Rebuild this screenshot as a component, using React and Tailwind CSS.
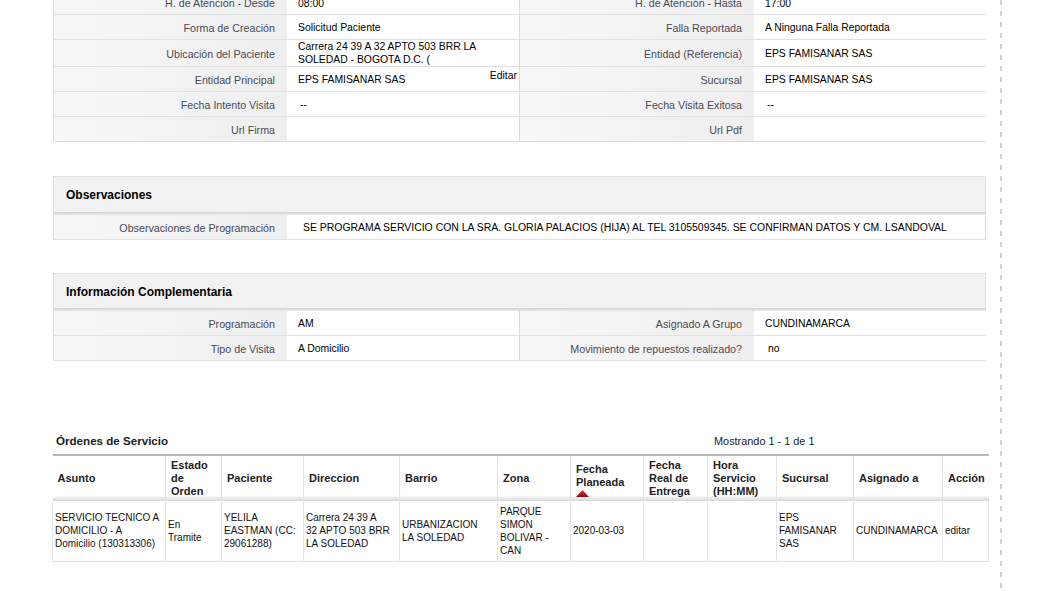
import React from "react";

const LBL = "flex items-center justify-end pr-[12px] pt-[2px] text-right text-[10.7px] text-[#4a4a56] bg-[linear-gradient(to_right,#f7f7f7,#efefef)]";
const VAL = "flex items-center pl-[11px] text-[10.4px] text-black bg-white";

function DRow({ h, cells, tight }) {
  const pad = tight ? "pt-0" : "pt-[2px]";
  return (
    <div className={`grid grid-cols-[233px_233px_234px_233px] border-b border-[#e0e0e0] ${h}`}>
      <div className={LBL}>{cells[0]}</div>
      <div className={`${VAL} ${pad} border-r border-[#dcdcdc] relative overflow-hidden`}>{cells[1]}</div>
      <div className={LBL}>{cells[2]}</div>
      <div className={`${VAL} pt-[2px]`}>{cells[3]}</div>
    </div>
  );
}

function SectionHead({ title, h }) {
  return (
    <>
      <div className={`flex items-center pl-[12px] pt-[1px] bg-[#f2f2f2] text-[12px] font-bold text-black ${h}`}>{title}</div>
      <div className="h-[3px] bg-[linear-gradient(to_bottom,#d2d2d2,#ececec)]" />
    </>
  );
}

const TH = "px-[5px] text-left align-middle font-bold text-[11px] leading-[13px] text-[#222] border-l border-[#e3e3e3] first:border-l-0";
const TD = "pl-[2px] pr-[1px] py-[3px] text-left align-middle text-[10px] leading-[13px] text-[#111] border-l border-[#e6e6e6]";

export default function App() {
  return (
    <div className="flex min-h-[591px] bg-white font-['Liberation_Sans',Arial,sans-serif] overflow-hidden">
      <div className="w-[1000px] shrink-0 pl-[53px] pr-[14px]">
        {/* Detail table */}
        <div className="mt-[-9px] border-l border-r border-[#e0e0e0] w-[933px]">
          <DRow h="h-[24px]" cells={["H. de Atención - Desde", "08:00", "H. de Atención - Hasta", "17:00"]} />
          <DRow h="h-[25px]" cells={["Forma de Creación", "Solicitud Paciente", "Falla Reportada", "A Ninguna Falla Reportada"]} />
          <DRow
            h="h-[27px]"
            tight
            cells={[
              "Ubicación del Paciente",
              <span className="leading-[13px]">Carrera 24 39 A 32 APTO 503 BRR LA<br />SOLEDAD - BOGOTA D.C. (</span>,
              "Entidad (Referencia)",
              "EPS FAMISANAR SAS",
            ]}
          />
          <DRow
            h="h-[25px]"
            cells={[
              "Entidad Principal",
              <>
                <span>EPS FAMISANAR SAS</span>
                <a className="absolute right-[2px] top-[1px] text-[10.4px] text-black">Editar</a>
              </>,
              "Sucursal",
              "EPS FAMISANAR SAS",
            ]}
          />
          <DRow h="h-[25px]" cells={["Fecha Intento Visita", <span className="pl-[2px]">--</span>, "Fecha Visita Exitosa", <span className="pl-[2px]">--</span>]} />
          <DRow h="h-[25px]" cells={["Url Firma", "", "Url Pdf", ""]} />
        </div>

        {/* Observaciones */}
        <div className="mt-[34px] w-[933px] border border-[#e0e0e0]">
          <SectionHead title="Observaciones" h="h-[35px]" />
          <div className="grid grid-cols-[233px_1fr] h-[24px]">
            <div className={LBL}>Observaciones de Programación</div>
            <div className="flex items-center pl-[16px] pt-[2px] text-[10.45px] text-black bg-white">
              SE PROGRAMA SERVICIO CON LA SRA. GLORIA PALACIOS (HIJA) AL TEL 3105509345. SE CONFIRMAN DATOS Y CM. LSANDOVAL
            </div>
          </div>
        </div>

        {/* Información Complementaria */}
        <div className="mt-[33px] w-[933px] border-l border-r border-t border-[#e0e0e0]">
          <SectionHead title="Información Complementaria" h="h-[34px]" />
          <DRow h="h-[25px]" cells={["Programación", "AM", "Asignado A Grupo", "CUNDINAMARCA"]} />
          <DRow h="h-[25px]" cells={["Tipo de Visita", "A Domicilio", "Movimiento de repuestos realizado?", <span className="pl-[3px]">no</span>]} />
        </div>

        {/* Órdenes de Servicio */}
        <div className="mt-[73px] ml-[-1px] flex pl-[4px] leading-[14px]">
          <div className="w-[658px] text-[11.6px] font-bold text-[#222]">Órdenes de Servicio</div>
          <div className="text-[10.9px] text-[#222]">Mostrando 1 - 1 de 1</div>
        </div>
        <table className="mt-[6px] ml-[-1px] w-[936px] table-fixed border-collapse border-t-2 border-[#b8b8b8]">
          <colgroup>
            <col className="w-[113px]" />
            <col className="w-[56px]" />
            <col className="w-[82px]" />
            <col className="w-[96px]" />
            <col className="w-[98px]" />
            <col className="w-[73px]" />
            <col className="w-[73px]" />
            <col className="w-[64px]" />
            <col className="w-[69px]" />
            <col className="w-[77px]" />
            <col className="w-[89px]" />
            <col className="w-[46px]" />
          </colgroup>
          <thead>
            <tr className="h-[46px] bg-[linear-gradient(to_bottom,#ffffff_0,#ffffff_88%,#e8e8e8_94%,#d6d6d6_100%)]">
              <th className={TH}>Asunto</th>
              <th className={TH}>Estado<br />de<br />Orden</th>
              <th className={TH}>Paciente</th>
              <th className={TH}>Direccion</th>
              <th className={TH}>Barrio</th>
              <th className={TH}>Zona</th>
              <th className={TH}>
                <div className="pt-[2px]">Fecha<br />Planeada</div>
                <svg width="13" height="7" viewBox="0 0 13 7" className="block mt-[1px]">
                  <defs>
                    <linearGradient id="tri" x1="0" y1="0" x2="0" y2="1">
                      <stop offset="0" stopColor="#e0303a" />
                      <stop offset="1" stopColor="#8a0a12" />
                    </linearGradient>
                  </defs>
                  <polygon points="6.5,0 13,7 0,7" fill="url(#tri)" />
                </svg>
              </th>
              <th className={TH}>Fecha<br />Real de<br />Entrega</th>
              <th className={TH}>Hora<br />Servicio<br />(HH:MM)</th>
              <th className={TH}>Sucursal</th>
              <th className={TH}>Asignado a</th>
              <th className={TH}>Acción</th>
            </tr>
          </thead>
          <tbody>
            <tr className="border-b border-[#e0e0e0] h-[60px]">
              <td className={TD}>SERVICIO TECNICO A<br />DOMICILIO - A<br />Domicilio (130313306)</td>
              <td className={TD}>En<br />Tramite</td>
              <td className={TD}>YELILA<br />EASTMAN (CC:<br />29061288)</td>
              <td className={TD}>Carrera 24 39 A<br />32 APTO 503 BRR<br />LA SOLEDAD</td>
              <td className={TD}>URBANIZACION<br />LA SOLEDAD</td>
              <td className={TD}>PARQUE<br />SIMON<br />BOLIVAR -<br />CAN</td>
              <td className={TD}>2020-03-03</td>
              <td className={TD}></td>
              <td className={TD}></td>
              <td className={TD}>EPS<br />FAMISANAR<br />SAS</td>
              <td className={TD}>CUNDINAMARCA</td>
              <td className={`${TD} border-r`}>editar</td>
            </tr>
          </tbody>
        </table>
      </div>
      <div className="w-[2px] shrink-0 bg-[repeating-linear-gradient(to_bottom,#d0d0d0_0,#d0d0d0_5px,transparent_5px,transparent_11px)]" />
      <div className="flex-1" />
    </div>
  );
}
